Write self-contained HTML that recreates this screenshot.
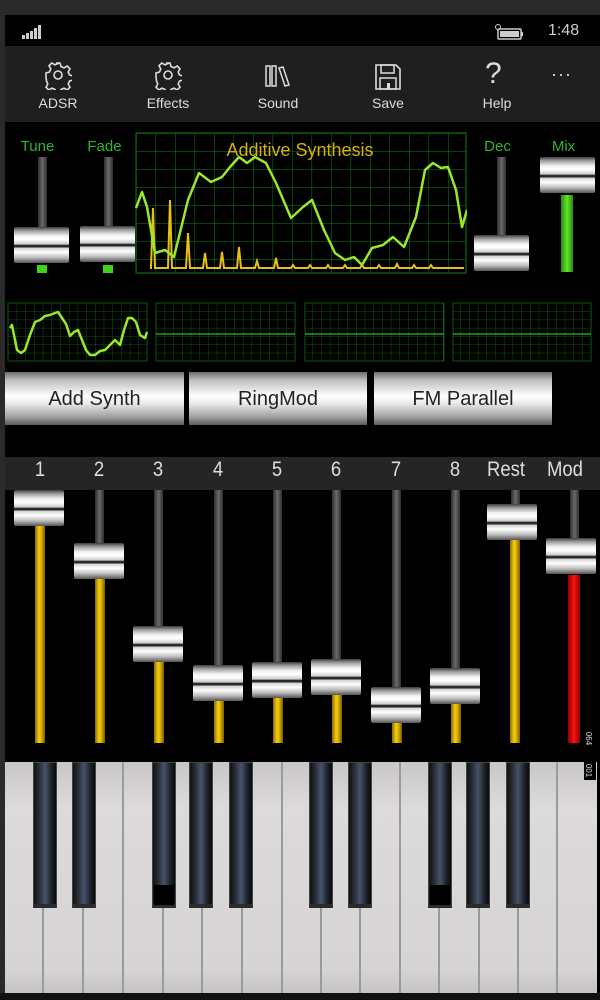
<!DOCTYPE html>
<html><head><meta charset="utf-8"><style>
*{margin:0;padding:0;box-sizing:border-box}
body{width:600px;height:1000px;background:#2a2a2a;position:relative;overflow:hidden;font-family:"Liberation Sans",sans-serif}
.a{position:absolute}
.knob{position:absolute;width:55px;height:36px;border-radius:2px;background:linear-gradient(#3c3c3c 0%,#9a9a9a 10%,#f4f4f4 25%,#ffffff 35%,#c8c8c8 48%,#2a2a2a 50%,#2a2a2a 56%,#d0d0d0 58%,#ffffff 70%,#bdbdbd 85%,#555 100%)}
.trk{position:absolute;width:9px;background:linear-gradient(90deg,#2e2e2e,#6a6a6a 50%,#2e2e2e)}
.yel{position:absolute;width:10px;background:linear-gradient(90deg,#8a6a00,#f4cc10 40%,#e0b800 60%,#7a5c00)}
.lbl{position:absolute;color:#2db52d;font-size:15px;text-align:center}
.btn{position:absolute;top:372px;height:53px;background:linear-gradient(#6c6c6c 0%,#bdbdbd 15%,#fff 45%,#e8e8e8 60%,#a0a0a0 85%,#5a5a5a 100%);color:#222;font-size:20px;text-align:center;line-height:55px}
.ab{position:absolute;top:95px;width:80px;text-align:center;color:#ddd;font-size:14px}
.sl{position:absolute;top:458px;width:50px;text-align:center;color:#ddd;font-size:21px;transform:scaleX(0.88)}
.bk{position:absolute;top:762px;width:24px;height:146px;background:linear-gradient(90deg,#111 0%,#2a2e36 25%,#45536a 50%,#1c2028 80%,#0a0a0a 100%);border:1px solid #444;border-bottom:4px solid #2b2b2b}
.wl{position:absolute;top:762px;width:2px;height:231px;background:#9a9a9a}
</style></head><body>
<div class="a" style="left:5px;top:15px;width:595px;height:31px;background:#000"></div>
<svg class="a" style="left:22px;top:24px" width="22" height="16"><rect x="0" y="11" width="3" height="4" fill="#ccc"/><rect x="4" y="9" width="3" height="6" fill="#ccc"/><rect x="8" y="7" width="3" height="8" fill="#ccc"/><rect x="12" y="4" width="3" height="11" fill="#ccc"/><rect x="16" y="1" width="3" height="14" fill="#ccc"/></svg>
<svg class="a" style="left:494px;top:23px" width="32" height="18"><circle cx="4" cy="4" r="2.5" fill="none" stroke="#ccc"/><rect x="4" y="6" width="23" height="10" rx="1" fill="none" stroke="#ccc" stroke-width="1.5"/><rect x="6" y="8" width="19" height="6" fill="#ccc"/><rect x="27" y="9" width="2" height="4" fill="#ccc"/></svg>
<div class="a" style="left:548px;top:22px;color:#ccc;font-size:16px">1:48</div>
<div class="a" style="left:5px;top:46px;width:595px;height:76px;background:#1f1f1f"></div>
<svg class="a" style="left:44px;top:62px" width="28" height="28" viewBox="0 0 28 28"><path d="M12 2h4l1 3.5 3 1.3 3.2-1.8 2.8 2.8-1.8 3.2 1.3 3 3.5 1v4l-3.5 1-1.3 3 1.8 3.2-2.8 2.8-3.2-1.8-3 1.3-1 3.5h-4l-1-3.5-3-1.3-3.2 1.8-2.8-2.8 1.8-3.2-1.3-3L2 16v-4l3.5-1 1.3-3L5 4.8 7.8 2 11 3.8l3-1.3z" fill="none" stroke="#ddd" stroke-width="1.6" transform="translate(0,-1)"/><circle cx="14" cy="13" r="4" fill="none" stroke="#ddd" stroke-width="1.6"/></svg>
<svg class="a" style="left:154px;top:62px" width="28" height="28" viewBox="0 0 28 28"><path d="M12 2h4l1 3.5 3 1.3 3.2-1.8 2.8 2.8-1.8 3.2 1.3 3 3.5 1v4l-3.5 1-1.3 3 1.8 3.2-2.8 2.8-3.2-1.8-3 1.3-1 3.5h-4l-1-3.5-3-1.3-3.2 1.8-2.8-2.8 1.8-3.2-1.3-3L2 16v-4l3.5-1 1.3-3L5 4.8 7.8 2 11 3.8l3-1.3z" fill="none" stroke="#ddd" stroke-width="1.6" transform="translate(0,-1)"/><circle cx="14" cy="13" r="4" fill="none" stroke="#ddd" stroke-width="1.6"/></svg>
<svg class="a" style="left:265px;top:64px" width="28" height="26"><rect x="1" y="2" width="4" height="20" fill="none" stroke="#ddd" stroke-width="1.5"/><rect x="7" y="2" width="4" height="20" fill="none" stroke="#ddd" stroke-width="1.5"/><path d="M14 4l4-1 6 18-4 1z" fill="none" stroke="#ddd" stroke-width="1.5"/></svg>
<svg class="a" style="left:374px;top:63px" width="28" height="28"><path d="M2 2h20l4 4v20H2z" fill="none" stroke="#ddd" stroke-width="1.6"/><rect x="7" y="2" width="13" height="8" fill="none" stroke="#ddd" stroke-width="1.5"/><rect x="6" y="15" width="16" height="11" fill="none" stroke="#ddd" stroke-width="1.5"/><rect x="13" y="20" width="3" height="6" fill="#ddd"/></svg>
<div class="a" style="left:485px;top:57px;color:#ddd;font-size:30px;font-weight:300">?</div>
<div class="a" style="left:551px;top:64px;color:#ddd;font-size:18px;letter-spacing:1px">···</div>
<div class="ab" style="left:18px">ADSR</div>
<div class="ab" style="left:128px">Effects</div>
<div class="ab" style="left:238px">Sound</div>
<div class="ab" style="left:348px">Save</div>
<div class="ab" style="left:457px">Help</div>
<div class="a" style="left:5px;top:122px;width:595px;height:878px;background:#000"></div>
<div class="lbl" style="left:10px;top:138px;width:55px">Tune</div>
<div class="lbl" style="left:77px;top:138px;width:55px">Fade</div>
<div class="lbl" style="left:470px;top:138px;width:55px">Dec</div>
<div class="lbl" style="left:536px;top:138px;width:55px">Mix</div>
<div class="trk" style="left:38px;top:157px;height:70px"></div>
<div class="knob" style="left:14px;top:227px"></div>
<div class="a" style="left:37px;top:265px;width:10px;height:8px;background:#3ed21a"></div>
<div class="trk" style="left:104px;top:157px;height:69px"></div>
<div class="knob" style="left:80px;top:226px"></div>
<div class="a" style="left:103px;top:265px;width:10px;height:8px;background:#3ed21a"></div>
<div class="trk" style="left:497px;top:157px;height:78px"></div>
<div class="knob" style="left:474px;top:235px"></div>
<div class="knob" style="left:540px;top:157px"></div>
<div class="a" style="left:561px;top:195px;width:12px;height:77px;background:linear-gradient(90deg,#2a8a10,#5ee82a 50%,#2a8a10)"></div>
<svg class="a" style="left:135px;top:132px" width="332" height="142" viewBox="135 132 332 142">
<defs><pattern id="g" x="136" y="133" width="19.5" height="18" patternUnits="userSpaceOnUse"><path d="M0 0V18M0 0H19.5" stroke="#0f6a12" stroke-width="1.2" fill="none"/></pattern></defs>
<rect x="136" y="133" width="330" height="140" fill="url(#g)" stroke="#0f6a12" stroke-width="1.2"/>
<path d="M150 268 L151 268 153 208 155 268 168 268 170 200 172 268 186 268 188 233 190 268 203 268 205 253 207 268 220 268 222 252 224 268 237 268 239 247 241 268 255 268 257 261 259 268 274 268 276 258 278 268 291 268 293 265 295 268 308 268 310 265 312 268 326 268 328 265 330 268 343 268 345 265 347 268 360 268 362 265 364 268 377 268 379 265 381 268 395 268 397 264 399 268 412 268 414 265 416 268 429 268 431 265 433 268 464 268" fill="none" stroke="#e8c010" stroke-width="2"/>
<path d="M136 208 L142 192 147 207 155 253 165 250 174 257 188 200 199 173 211 182 222 177 230 167 239 157 247 163 255 157 266 163 276 183 291 218 303 207 312 200 324 230 335 253 345 260 354 257 362 265 372 248 383 245 393 237 404 247 416 217 425 170 433 163 441 168 448 167 456 190 462 227 467 210" fill="none" stroke="#9be82a" stroke-width="2.5" stroke-linejoin="round"/>
<text x="300" y="156" text-anchor="middle" font-family="Liberation Sans" font-size="18" fill="#d8b010">Additive Synthesis</text>
</svg>
<svg class="a" style="left:0;top:300px" width="600" height="64">
<defs><pattern id="s" x="8" y="303" width="8.7" height="8.3" patternUnits="userSpaceOnUse"><path d="M0 0V9M0 0H9" stroke="#0c5a0e" stroke-width="1" fill="none"/></pattern></defs>
<g transform="translate(0,-300)">
<rect x="8" y="303" width="139" height="58" fill="url(#s)" stroke="#0c5a0e"/>
<rect x="156" y="303" width="139" height="58" fill="url(#s)" stroke="#0c5a0e"/>
<rect x="305" y="303" width="139" height="58" fill="url(#s)" stroke="#0c5a0e"/>
<rect x="453" y="303" width="138" height="58" fill="url(#s)" stroke="#0c5a0e"/>
<line x1="156" y1="334" x2="295" y2="334" stroke="#1fa21f" stroke-width="1.5"/>
<line x1="305" y1="334" x2="444" y2="334" stroke="#1fa21f" stroke-width="1.5"/>
<line x1="453" y1="334" x2="591" y2="334" stroke="#1fa21f" stroke-width="1.5"/>
<path d="M10 328 L12 325 14 335 17 350 21 353 25 350 30 335 35 322 40 320 45 316 50 315 55 313 58 312 62 318 66 324 70 336 74 332 78 330 82 340 86 350 90 355 95 355 100 351 105 350 110 345 115 340 120 345 124 330 128 318 132 318 136 322 140 335 145 338 147 332" fill="none" stroke="#9be82a" stroke-width="2.5" stroke-linejoin="round"/>
</g></svg>
<div class="btn" style="left:5px;width:179px">Add Synth</div>
<div class="btn" style="left:189px;width:178px">RingMod</div>
<div class="btn" style="left:374px;width:178px">FM Parallel</div>
<div class="a" style="left:5px;top:457px;width:595px;height:33px;background:#252525"></div>
<div class="sl" style="left:15px">1</div><div class="sl" style="left:74px">2</div><div class="sl" style="left:133px">3</div><div class="sl" style="left:193px">4</div><div class="sl" style="left:252px">5</div><div class="sl" style="left:311px">6</div><div class="sl" style="left:371px">7</div><div class="sl" style="left:430px">8</div><div class="sl" style="left:481px">Rest</div><div class="sl" style="left:540px">Mod</div>
<div class="trk" style="left:95px;top:490px;height:55px"></div>
<div class="trk" style="left:154px;top:490px;height:138px"></div>
<div class="trk" style="left:214px;top:490px;height:177px"></div>
<div class="trk" style="left:273px;top:490px;height:174px"></div>
<div class="trk" style="left:332px;top:490px;height:171px"></div>
<div class="trk" style="left:392px;top:490px;height:197px"></div>
<div class="trk" style="left:451px;top:490px;height:180px"></div>
<div class="trk" style="left:511px;top:490px;height:16px"></div>
<div class="trk" style="left:570px;top:490px;height:50px"></div>
<div class="yel" style="left:35px;top:526px;height:217px"></div>
<div class="yel" style="left:95px;top:579px;height:164px"></div>
<div class="yel" style="left:154px;top:662px;height:81px"></div>
<div class="yel" style="left:214px;top:701px;height:42px"></div>
<div class="yel" style="left:273px;top:698px;height:45px"></div>
<div class="yel" style="left:332px;top:695px;height:48px"></div>
<div class="yel" style="left:392px;top:723px;height:20px"></div>
<div class="yel" style="left:451px;top:704px;height:39px"></div>
<div class="yel" style="left:510px;top:540px;height:203px"></div>
<div class="a" style="left:568px;top:575px;width:12px;height:168px;background:linear-gradient(90deg,#8a0000,#ff1010 50%,#8a0000)"></div>
<div class="knob" style="left:14px;top:490px;width:50px"></div>
<div class="knob" style="left:74px;top:543px;width:50px"></div>
<div class="knob" style="left:133px;top:626px;width:50px"></div>
<div class="knob" style="left:193px;top:665px;width:50px"></div>
<div class="knob" style="left:252px;top:662px;width:50px"></div>
<div class="knob" style="left:311px;top:659px;width:50px"></div>
<div class="knob" style="left:371px;top:687px;width:50px"></div>
<div class="knob" style="left:430px;top:668px;width:50px"></div>
<div class="knob" style="left:487px;top:504px;width:50px"></div>
<div class="knob" style="left:546px;top:538px;width:50px"></div>
<div class="a" style="left:5px;top:762px;width:592px;height:231px;background:linear-gradient(#c8c6c6,#dcdada 20%,#d6d4d4 90%,#c4c2c2)"></div>
<div class="wl" style="left:42px"></div><div class="wl" style="left:82px"></div><div class="wl" style="left:122px"></div><div class="wl" style="left:162px"></div><div class="wl" style="left:201px"></div><div class="wl" style="left:241px"></div><div class="wl" style="left:281px"></div><div class="wl" style="left:320px"></div><div class="wl" style="left:359px"></div><div class="wl" style="left:399px"></div><div class="wl" style="left:438px"></div><div class="wl" style="left:478px"></div><div class="wl" style="left:517px"></div><div class="wl" style="left:556px"></div>
<div class="bk" style="left:33px"></div><div class="bk" style="left:72px"></div><div class="bk" style="left:152px"></div><div class="bk" style="left:189px"></div><div class="bk" style="left:229px"></div><div class="bk" style="left:309px"></div><div class="bk" style="left:348px"></div><div class="bk" style="left:428px"></div><div class="bk" style="left:466px"></div><div class="bk" style="left:506px"></div>
<div class="a" style="left:154px;top:885px;width:20px;height:20px;background:#000"></div>
<div class="a" style="left:430px;top:885px;width:20px;height:20px;background:#000"></div>
<div class="a" style="left:584px;top:730px;width:12px;height:50px;background:#000"></div>
<div class="a" style="left:582px;top:734px;color:#ddd;font-size:8px;transform:rotate(90deg)">064</div>
<div class="a" style="left:582px;top:766px;color:#ddd;font-size:8px;transform:rotate(90deg)">001</div>
<div class="a" style="left:0;top:993px;width:600px;height:7px;background:#111"></div>
</body></html>
